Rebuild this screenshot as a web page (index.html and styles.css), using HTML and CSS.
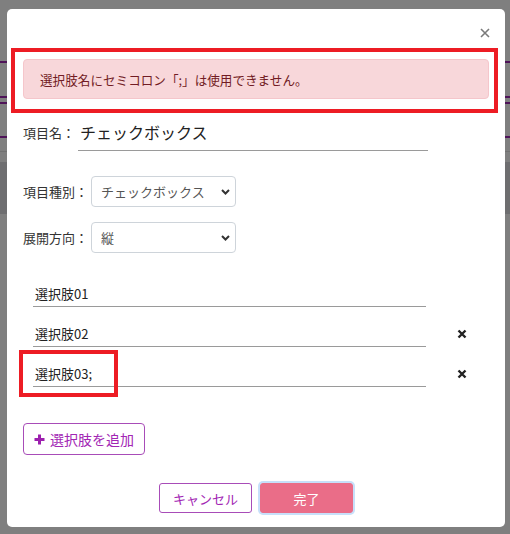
FILE: index.html
```html
<!DOCTYPE html>
<html lang="ja">
<head>
    <meta charset="UTF-8">
    <meta name="viewport" content="width=device-width, initial-scale=1.0">
    <title>項目の編集</title>
    <link rel="stylesheet" href="styles.css">
</head>
<body>
    <!-- Page behind the dialog -->
    <div class="page">
        <div class="page-title"></div>
        <div class="page-nav"></div>
        <div class="page-nav-thin"></div>
        <div class="page-sub"></div>
        <div class="page-gap"></div>
        <div class="page-toolbar"></div>
    </div>

    <div class="backdrop"></div>

    <!-- Edit item dialog -->
    <div class="modal">
        <div class="modal-header">
            <button class="btn-close" aria-label="閉じる">
                <svg width="10" height="10" viewBox="0 0 10 10"><path d="M1 1L9 9M9 1L1 9" stroke="#7a7a7a" stroke-width="1.6" fill="none"/></svg>
            </button>
        </div>

        <div class="modal-body">
            <div class="flag flag-alert">
                <div class="alert">選択肢名にセミコロン「;」は使用できません。</div>
            </div>

            <div class="field-name">
                <label class="label">項目名：</label>
                <input class="input-name" type="text" value="チェックボックス">
            </div>

            <div class="field">
                <label class="label">項目種別：</label>
                <div class="select-wrap">
                    <select class="select">
                        <option>チェックボックス</option>
                    </select>
                    <svg class="chevron" width="9" height="6" viewBox="0 0 9 6"><path d="M1 1L4.5 4.5L8 1" stroke="#333" stroke-width="2" fill="none"/></svg>
                </div>
            </div>

            <div class="field">
                <label class="label">展開方向：</label>
                <div class="select-wrap">
                    <select class="select">
                        <option>縦</option>
                    </select>
                    <svg class="chevron" width="9" height="6" viewBox="0 0 9 6"><path d="M1 1L4.5 4.5L8 1" stroke="#333" stroke-width="2" fill="none"/></svg>
                </div>
            </div>

            <div class="choices">
                <div class="choice">
                    <input class="input-choice" type="text" value="選択肢01">
                </div>
                <div class="choice">
                    <input class="input-choice" type="text" value="選択肢02">
                    <button class="btn-remove" aria-label="削除">
                        <svg width="10" height="10" viewBox="0 0 10 10"><path d="M1.5 1.5L8.5 8.5M8.5 1.5L1.5 8.5" stroke="#222" stroke-width="2.4" fill="none"/></svg>
                    </button>
                </div>
                <div class="choice">
                    <input class="input-choice" type="text" value="選択肢03;">
                    <button class="btn-remove" aria-label="削除">
                        <svg width="10" height="10" viewBox="0 0 10 10"><path d="M1.5 1.5L8.5 8.5M8.5 1.5L1.5 8.5" stroke="#222" stroke-width="2.4" fill="none"/></svg>
                    </button>
                    <div class="flag flag-choice"></div>
                </div>
            </div>

            <button class="btn-add">
                <svg width="11" height="11" viewBox="0 0 11 11"><path d="M5.5 0.5V10.5M0.5 5.5H10.5" stroke="#9c1fae" stroke-width="3" fill="none"/></svg>
                選択肢を追加
            </button>
        </div>

        <div class="modal-footer">
            <button class="btn-cancel">キャンセル</button>
            <button class="btn-done">完了</button>
        </div>
    </div>
</body>
</html>
```

FILE: styles.css
```css
body {
    font-family: "Noto Sans CJK JP", "Noto Sans", sans-serif;
    margin: 0;
    padding: 0;
    background-color: #fff;
    color: #333;
    height: 534px;
    overflow: hidden;
}

/* ---- page under the backdrop ---- */
.page {
    display: flex;
    flex-direction: column;
}

.page-title,
.page-nav,
.page-nav-thin,
.page-sub {
    border-bottom: 2px solid #9c27b0;
}

.page-title {
    height: 61px;
}

.page-nav {
    height: 33px;
}

.page-nav-thin {
    height: 4px;
}

.page-sub {
    height: 32px;
}

.page-gap {
    height: 13px;
    border-bottom: 1px solid #e2e2e2;
}

.page-toolbar {
    height: 52px;
    margin-top: 10px;
    background-color: #dcdce0;
}

.backdrop {
    position: fixed;
    top: 0;
    left: 0;
    right: 0;
    bottom: 0;
    background-color: rgba(0, 0, 0, 0.5);
}

/* ---- dialog ---- */
.modal {
    position: absolute;
    top: 9px;
    left: 7px;
    width: 498px;
    background-color: #fff;
    border-radius: 5px;
}

.modal-header {
    display: flex;
    justify-content: flex-end;
    padding: 19px 15px 5px;
}

.btn-close,
.btn-remove {
    border: none;
    background: none;
    padding: 0;
    display: flex;
    cursor: pointer;
}

.modal-body {
    padding: 5px 16px 0;
}

/* red frames marking the invalid input */
.flag {
    border: 4px solid #ed1c24;
}

.flag-alert {
    margin: 0 -9px 0 -12px;
    padding: 7px 5px 10px 8px;
}

.flag-choice {
    position: absolute;
    left: -14px;
    top: -11px;
    width: 91px;
    height: 39px;
}

.alert {
    height: 40px;
    box-sizing: border-box;
    display: flex;
    align-items: center;
    padding: 0 16px;
    background-color: #f8d7da;
    border: 1px solid #f5c6cb;
    border-radius: 4px;
    color: #721c24;
    font-size: 12.6px;
}

.label {
    font-size: 13px;
    color: #333;
}

.field-name {
    display: flex;
    align-items: center;
    margin-top: 1px;
}

.field-name .label {
    width: 55px;
}

input[type="text"] {
    font-family: inherit;
    border: none;
    border-bottom: 1px solid #9a9a9a;
    outline: none;
    box-sizing: border-box;
    background: none;
    color: #222;
}

.input-name {
    width: 350px;
    height: 37px;
    padding: 0 2px;
    font-size: 16px;
}

.field {
    display: flex;
    align-items: center;
    margin-top: 25px;
}

.field + .field {
    margin-top: 15px;
}

.select-wrap {
    position: relative;
    margin-left: 3px;
}

.select {
    appearance: none;
    width: 145px;
    height: 31px;
    padding: 0 24px 0 9px;
    font-family: inherit;
    font-size: 13px;
    color: #555;
    background-color: #fff;
    border: 1px solid #ced4da;
    border-radius: 4px;
}

.chevron {
    position: absolute;
    right: 6px;
    top: 13px;
}

.choices {
    margin-top: 28px;
    padding-left: 10px;
}

.choice {
    position: relative;
    display: flex;
    align-items: center;
}

.choice + .choice {
    margin-top: 14px;
}

.input-choice {
    width: 393px;
    height: 26px;
    padding: 0 2px;
    font-size: 13px;
}

.btn-remove {
    margin-left: 31px;
}

.btn-add {
    display: flex;
    align-items: center;
    gap: 5px;
    margin-top: 36px;
    height: 32px;
    padding: 0 10px;
    font-family: inherit;
    font-size: 14px;
    color: #a226b4;
    background-color: #fff;
    border: 1px solid #a84cb8;
    border-radius: 4px;
    cursor: pointer;
}

.modal-footer {
    display: flex;
    justify-content: center;
    gap: 8px;
    padding: 28px 0 14px;
}

.btn-cancel,
.btn-done {
    height: 30px;
    font-family: inherit;
    font-size: 13px;
    border-radius: 3px;
    cursor: pointer;
}

.btn-cancel {
    width: 93px;
    color: #a226b4;
    background-color: #fff;
    border: 1px solid #a84cb8;
}

.btn-done {
    width: 93px;
    color: #fff;
    background-color: #ea6d88;
    border: 1px solid #ea6d88;
    box-shadow: 0 0 0 2px #c7e0fa;
}
```
